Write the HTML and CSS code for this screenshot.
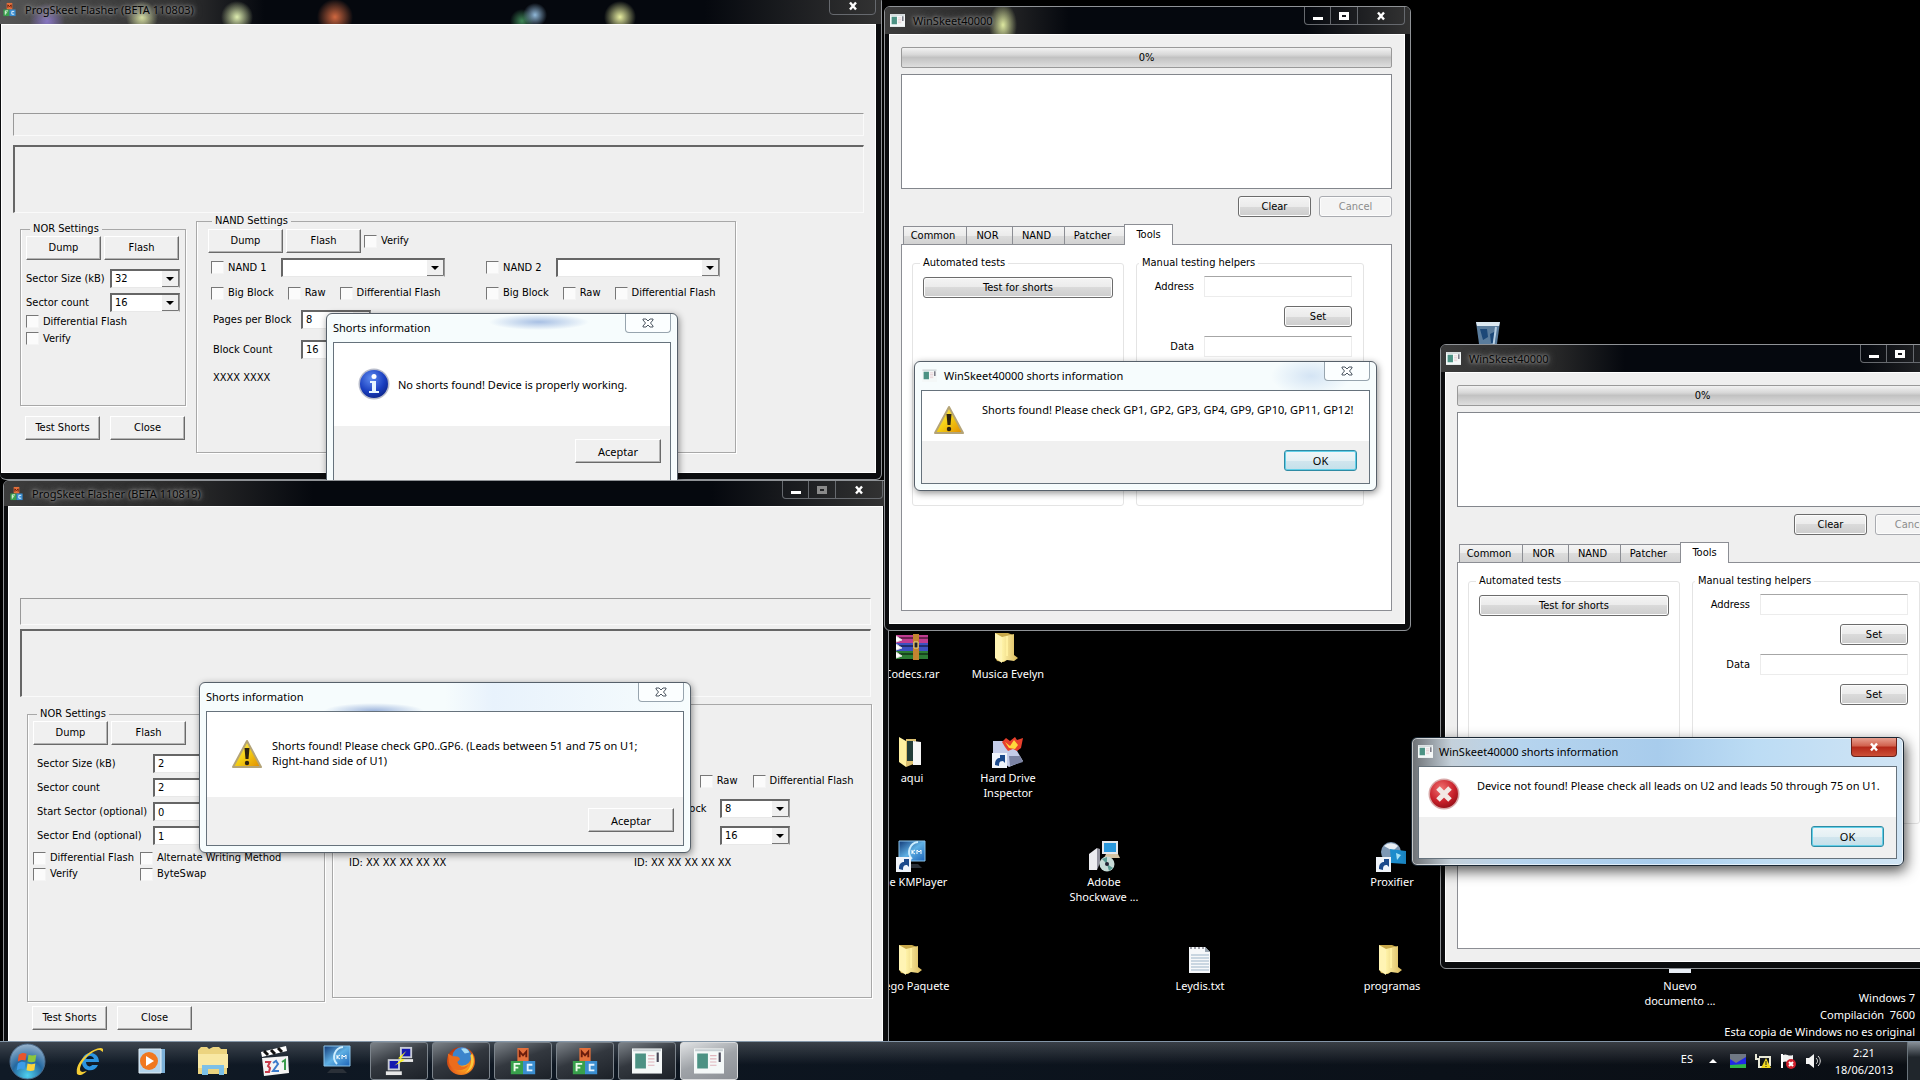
FILE: index.html
```html
<!DOCTYPE html>
<html lang="en">
<head>
<meta charset="utf-8">
<title>Desktop</title>
<link rel="stylesheet" href="styles.css">
</head>
<body>
<svg class="defs" aria-hidden="true">
  <defs>
    <linearGradient id="gFolder" x1="0" y1="0" x2="1" y2="0"><stop offset="0" stop-color="#fff3a8"/><stop offset=".5" stop-color="#ecd684"/><stop offset="1" stop-color="#d9b95a"/></linearGradient>
    <linearGradient id="gBlue" x1="0" y1="0" x2="1" y2="1"><stop offset="0" stop-color="#123a78"/><stop offset=".5" stop-color="#5fb0e4"/><stop offset="1" stop-color="#1d64b8"/></linearGradient>
    <radialGradient id="gInfo" cx=".4" cy=".3" r=".8"><stop offset="0" stop-color="#5f8cf0"/><stop offset=".6" stop-color="#1a3fc0"/><stop offset="1" stop-color="#0a1f80"/></radialGradient>
    <radialGradient id="gRed" cx=".4" cy=".3" r=".8"><stop offset="0" stop-color="#f07070"/><stop offset=".6" stop-color="#c8202a"/><stop offset="1" stop-color="#8a0c14"/></radialGradient>
    <linearGradient id="gWarn" x1="0" y1="0" x2="1" y2="1"><stop offset="0" stop-color="#fff27a"/><stop offset=".5" stop-color="#f4cf14"/><stop offset="1" stop-color="#e08a00"/></linearGradient>
    <radialGradient id="gOrb" cx=".5" cy=".9" r=".9"><stop offset="0" stop-color="#4fd0ee"/><stop offset=".5" stop-color="#2468a0"/><stop offset="1" stop-color="#9ab4cc"/></radialGradient>
    <radialGradient id="gFox" cx=".6" cy=".7" r=".7"><stop offset="0" stop-color="#ffb020"/><stop offset=".6" stop-color="#e8641c"/><stop offset="1" stop-color="#b83a10"/></radialGradient>
    <symbol id="folder" viewBox="0 0 32 32"><path d="M3 1h13l5 2v20l-9 7-7-1-2-4z" fill="#c9a94a"/><path d="M3 1l7 4v26l-7-5z" fill="#fff4b4"/><path d="M10 5l12-3v21l4 3-4 3-7-1-5 2z" fill="url(#gFolder)"/><path d="M15 4v20" stroke="#fff0a0" stroke-width="2"/></symbol>
    <symbol id="info" viewBox="0 0 32 32"><circle cx="16" cy="16" r="15.500" fill="#b8bccb"/><circle cx="16" cy="16" r="14" fill="url(#gInfo)"/><circle cx="16" cy="8.500" r="2.500" fill="#fff"/><path d="M12 13h6v10h3v2H11v-2h3v-8h-2z" fill="#e8f6ff"/></symbol>
    <symbol id="warn" viewBox="0 0 32 32"><path d="M16 3l14 26H2z" fill="url(#gWarn)" stroke="#b4a478" stroke-width="2" stroke-linejoin="round"/><path d="M13.500 10h5l-1 11h-3z" fill="#2b2110"/><circle cx="16" cy="25" r="2.200" fill="#2b2110"/></symbol>
    <symbol id="error" viewBox="0 0 32 32"><circle cx="16" cy="16" r="15.500" fill="#d8a8a8"/><circle cx="16" cy="16" r="14" fill="url(#gRed)"/><path d="M10 10l12 12M22 10L10 22" stroke="#f2e8e4" stroke-width="5"/></symbol>
    <symbol id="app" viewBox="0 0 28 24"><path d="M0 0h28v24H0z" fill="#f4f8f8"/><path d="M1 1h26v2H1z" fill="#c6ced2"/><path d="M3 5h10v14H3z" fill="#4c9284"/><path d="M15 7h6M15 10h6M15 13h6M15 16h6" stroke="#e0b4bc"/><path d="M23 4h2v9h-2z" fill="#445"/></symbol>
    <symbol id="mfc" viewBox="0 0 28 32"><path d="M8 2h12v14H8z" fill="#e4703c"/><path d="M10.500 12V6l3.500 4 3.500-4v6" fill="none" stroke="#6a1c0c" stroke-width="2"/><path d="M1 16h13v14H1z" fill="#38a04c"/><path d="M5 27v-8h6M5 23h4" fill="none" stroke="#eafbe8" stroke-width="2"/><path d="M14 16h13v14H14z" fill="#3b8ed0"/><path d="M24 20h-5v6h5" fill="none" stroke="#e6f4ff" stroke-width="2"/></symbol>
    <symbol id="kmp" viewBox="0 0 32 32"><path d="M3 1h26v20H3z" fill="url(#gBlue)" stroke="#8bc4ea"/><path d="M22 2a10 10 0 0 0-6 17" fill="none" stroke="#cdeeff" stroke-width="2"/><path d="M16 14v-4m0 2l3-2m-3 2l3 2m2 0v-4l2 2 2-2v4" fill="none" stroke="#fff"/><path d="M10 24h12l4 4H6z" fill="#2a3038"/></symbol>
    <symbol id="arrow" viewBox="0 0 32 32"><path d="M0 17h15v15H0z" fill="#f0f4fa"/><path d="M3 29c0-5 2-7 5-7v-3h-3 8v8l-2-2c-3 0-4 1-4 5z" fill="#1c4a8c"/></symbol>
    <symbol id="min" viewBox="0 0 14 12"><path d="M2 7h10v3H2z" fill="currentColor"/></symbol>
    <symbol id="max" viewBox="0 0 14 12"><path d="M2 2h10v8H2zM5 5v2h4V5z" fill="currentColor" fill-rule="evenodd"/></symbol>
    <symbol id="x" viewBox="0 0 14 12"><path d="M4 2.500l6 7M10 2.500l-6 7" stroke="currentColor" stroke-width="2.400"/></symbol>
    <symbol id="xo" viewBox="0 0 14 12"><path d="M2 2h3l2 2 2-2h3v1L9.500 6 12 9v1H9L7 8l-2 2H2V9l2.500-3L2 3z" fill="#fff" stroke="#4a5560"/></symbol>
  </defs>
</svg>

<main class="desktop">
  <ul class="icons">
    <li class="ic r4 c16"><svg viewBox="0 0 32 32"><path d="M4 2h24l-4 29H8z" fill="#5a7c9c"/><path d="M4 2h24l-1 4H5z" fill="#dce8f0"/><path d="M8 9h7l1 8-5 3zM18 14l6-3-1 12h-4z" fill="#1c4878"/><path d="M24 7l-3 22" stroke="#b8d0e4" stroke-width="2"/></svg></li>
    <li class="ic r7 c10"><svg viewBox="0 0 32 32"><path d="M0 3h32v8H0z" fill="#c03c90"/><path d="M0 11h32v8H0z" fill="#3c50c0"/><path d="M0 19h32v8H0z" fill="#2c7c34"/><path d="M0 6h32M0 14h32M0 22h32" stroke="#00000070" stroke-width="2"/><path d="M0 4l6 4-6 2M0 12l6 4-6 2M0 20l6 4-6 2" fill="#fff" stroke="#ddd"/><path d="M17 2h6v26h-6z" fill="#c48430"/><path d="M18 10h4v6h-4z" fill="#222" stroke="#ecd888"/></svg><span>Codecs.rar</span></li>
    <li class="ic r7 c11"><svg viewBox="0 0 32 32"><use href="#folder"/></svg><span>Musica Evelyn</span></li>
    <li class="ic r8 c10"><svg viewBox="0 0 32 32"><path d="M3 1l7 4v26l-7-5z" fill="#fff0a0"/><path d="M10 3h10v24l-10 4z" fill="#dcc070"/><path d="M11 5h8v20h-8z" fill="#223c38"/><path d="M17 5l8 1v23h-8z" fill="#f6f6f6"/></svg><span>aqui</span></li>
    <li class="ic r8 c11"><svg viewBox="0 0 32 32"><path d="M1 5h18l12 20-14 6L1 20z" fill="#c4cce8"/><path d="M17 20h11l3 6-13 4z" fill="#7c84a4"/><path d="M10 6l4-4 4 3 5-4 2 3 6-2-2 10-4 3-4-2-5 2-3-4z" fill="#e8402c"/><path d="M13 6l5 4 4-6 4 5-3 4-6-1z" fill="#ffd83c"/><use href="#arrow"/></svg><span>Hard Drive Inspector</span></li>
    <li class="ic r9 c10"><svg viewBox="0 0 32 32"><use href="#kmp"/><use href="#arrow"/></svg><span>The KMPlayer</span></li>
    <li class="ic r9 c12"><svg viewBox="0 0 32 32"><path d="M1 14l8-6v22H1z" fill="#ececf0"/><path d="M9 8l3 1v14l-3 7z" fill="#9494a0"/><path d="M14 1h16v13H14z" fill="#e4e8ec"/><path d="M16 3h12v9H16z" fill="#2a98dc"/><path d="M18 14h12l2 4H16z" fill="#d4c4a4"/><circle cx="19" cy="24" r="7.500" fill="#c8dcd8"/><path d="M19 24l-5-5 5-2zM19 24l6 4-4 3z" fill="#5c9c94"/><circle cx="19" cy="24" r="2" fill="#223"/></svg><span>Adobe Shockwave ...</span></li>
    <li class="ic r9 c15"><svg viewBox="0 0 32 32"><circle cx="15" cy="12" r="10" fill="#7e98b4"/><path d="M8 6c5-4 10-3 14 0l-5 5z" fill="#e8eef4"/><path d="M14 9l16 2v13l-15-1z" fill="#1c8ccc"/><path d="M20 13l5 2-4 5z" fill="#a8e4f8"/><use href="#arrow"/></svg><span>Proxifier</span></li>
    <li class="ic r10 c10"><svg viewBox="0 0 32 32"><use href="#folder"/></svg><span>Juego Paquete</span></li>
    <li class="ic r10 c13"><svg viewBox="0 0 32 32"><path d="M5 3h16l5 5v21H5z" fill="#f6f8fa"/><path d="M21 3v5h5z" fill="#98a4b0"/><path d="M6 4h15" stroke="#445" stroke-dasharray="2 2"/><path d="M7 11h18M7 14h18M7 17h18M7 20h18M7 23h18M7 26h18" stroke="#9cb4c8"/></svg><span>Leydis.txt</span></li>
    <li class="ic r10 c15"><svg viewBox="0 0 32 32"><use href="#folder"/></svg><span>programas</span></li>
    <li class="ic r10 c18"><svg viewBox="0 0 32 32"><path d="M5 3h22v26H5z" fill="#e8edf4"/></svg><span>Nuevo documento ...</span></li>
  </ul>

  <p class="watermark">Windows 7<br>Compilación &nbsp;7600<br>Esta copia de Windows no es original</p>

  <!-- ProgSkeet Flasher 110803 -->
  <section class="win dark w1">
    <header class="bar smudged"><svg class="tico" viewBox="0 0 28 32"><use href="#mfc"/></svg><h2>ProgSkeet Flasher (BETA 110803)</h2>
      <div class="ctl"><button class="cx" aria-label="Close"><svg><use href="#x"/></svg></button></div></header>
    <div class="client tahoma">
      <div class="strip"></div>
      <div class="well"></div>
      <div class="panels">
        <div class="left">
          <fieldset class="grp nor"><legend>NOR Settings</legend>
            <div class="btns"><button class="cb">Dump</button><button class="cb">Flash</button></div>
            <div class="fields">
              <label for="a1">Sector Size (kB)</label><select id="a1"><option>32</option></select>
              <label for="a2">Sector count</label><select id="a2"><option>16</option></select>
            </div>
            <label class="ck"><input type="checkbox">Differential Flash</label>
            <label class="ck"><input type="checkbox">Verify</label>
          </fieldset>
          <div class="btns foot"><button class="cb">Test Shorts</button><button class="cb">Close</button></div>
        </div>
        <fieldset class="grp nand"><legend>NAND Settings</legend>
          <div class="btns"><button class="cb">Dump</button><button class="cb">Flash</button><label class="ck"><input type="checkbox">Verify</label></div>
          <div class="chips">
            <div class="chip">
              <div class="pick"><label class="ck"><input type="checkbox">NAND 1</label><select aria-label="NAND 1 device"><option></option></select></div>
              <div class="opts"><label class="ck"><input type="checkbox">Big Block</label><label class="ck"><input type="checkbox">Raw</label><label class="ck"><input type="checkbox">Differential Flash</label></div>
              <div class="fields">
                <label for="a3">Pages per Block</label><select id="a3"><option>8</option></select>
                <label for="a4">Block Count</label><select id="a4"><option>16</option></select>
              </div>
              <p>XXXX XXXX</p>
            </div>
            <div class="chip">
              <div class="pick"><label class="ck"><input type="checkbox">NAND 2</label><select aria-label="NAND 2 device"><option></option></select></div>
              <div class="opts"><label class="ck"><input type="checkbox">Big Block</label><label class="ck"><input type="checkbox">Raw</label><label class="ck"><input type="checkbox">Differential Flash</label></div>
            </div>
          </div>
        </fieldset>
      </div>
    </div>
  </section>

  <section class="win light d1" role="dialog">
    <header class="bar"><h2>Shorts information</h2><div class="ctl"><button class="cx" aria-label="Close"><svg><use href="#xo"/></svg></button></div></header>
    <div class="body"><div class="msg"><svg viewBox="0 0 32 32"><use href="#info"/></svg><p>No shorts found! Device is properly working.</p></div>
      <div class="acts"><button class="cb wide">Aceptar</button></div></div>
  </section>

  <!-- ProgSkeet Flasher 110819 -->
  <section class="win dark w2">
    <header class="bar"><svg class="tico" viewBox="0 0 28 32"><use href="#mfc"/></svg><h2>ProgSkeet Flasher (BETA 110819)</h2>
      <div class="ctl"><button aria-label="Minimize"><svg><use href="#min"/></svg></button><button class="off" aria-label="Maximize"><svg><use href="#max"/></svg></button><button class="cx" aria-label="Close"><svg><use href="#x"/></svg></button></div></header>
    <div class="client tahoma">
      <div class="strip"></div>
      <div class="well"></div>
      <div class="panels">
        <div class="left">
          <fieldset class="grp nor"><legend>NOR Settings</legend>
            <div class="btns"><button class="cb">Dump</button><button class="cb">Flash</button></div>
            <div class="fields">
              <label for="b1">Sector Size (kB)</label><select id="b1"><option>2</option></select>
              <label for="b2">Sector count</label><select id="b2"><option>2</option></select>
              <label for="b3">Start Sector (optional)</label><input id="b3" type="text" value="0">
              <label for="b4">Sector End (optional)</label><input id="b4" type="text" value="1">
            </div>
            <div class="cks">
              <label class="ck"><input type="checkbox">Differential Flash</label><label class="ck"><input type="checkbox">Alternate Writing Method</label>
              <label class="ck"><input type="checkbox">Verify</label><label class="ck"><input type="checkbox">ByteSwap</label>
            </div>
          </fieldset>
          <div class="btns foot"><button class="cb">Test Shorts</button><button class="cb">Close</button></div>
        </div>
        <fieldset class="grp nand"><legend>NAND Settings</legend>
          <div class="chips">
            <div class="chip idonly"><p>ID: XX XX XX XX XX</p></div>
            <div class="chip">
              <div class="opts"><label class="ck"><input type="checkbox">Big Block</label><label class="ck"><input type="checkbox">Raw</label><label class="ck"><input type="checkbox">Differential Flash</label></div>
              <div class="fields">
                <label for="b5">Pages per Block</label><select id="b5"><option>8</option></select>
                <label for="b6">Block Count</label><select id="b6"><option>16</option></select>
              </div>
              <p>ID: XX XX XX XX XX</p>
            </div>
          </div>
        </fieldset>
      </div>
    </div>
  </section>

  <section class="win light d2" role="dialog">
    <header class="bar"><h2>Shorts information</h2><div class="ctl"><button class="cx" aria-label="Close"><svg><use href="#xo"/></svg></button></div></header>
    <div class="body"><div class="msg"><svg viewBox="0 0 32 32"><use href="#warn"/></svg><p>Shorts found! Please check GP0..GP6. (Leads between 51 and 75 on U1;<br>Right-hand side of U1)</p></div>
      <div class="acts"><button class="cb wide">Aceptar</button></div></div>
  </section>

  <!-- WinSkeet, left copy -->
  <section class="win dark skeet w3">
    <header class="bar"><svg class="tico" viewBox="0 0 28 24"><use href="#app"/></svg><h2>WinSkeet40000</h2>
      <div class="ctl"><button aria-label="Minimize"><svg><use href="#min"/></svg></button><button aria-label="Maximize"><svg><use href="#max"/></svg></button><button class="cx" aria-label="Close"><svg><use href="#x"/></svg></button></div></header>
    <div class="client tahoma">
      <div class="progress" role="progressbar" aria-valuenow="0">0%</div>
      <textarea aria-label="Log"></textarea>
      <div class="logbtns"><button class="qb">Clear</button><button class="qb" disabled>Cancel</button></div>
      <div class="tabs" role="tablist"><button role="tab">Common</button><button role="tab">NOR</button><button role="tab">NAND</button><button role="tab">Patcher</button><button role="tab" class="on">Tools</button></div>
      <div class="pane">
        <fieldset class="auto"><legend>Automated tests</legend><button class="qb">Test for shorts</button></fieldset>
        <fieldset class="manual"><legend>Manual testing helpers</legend>
          <label for="c1">Address</label><input id="c1" type="text"><button class="qb">Set</button>
          <label for="c2">Data</label><input id="c2" type="text"><button class="qb">Set</button>
        </fieldset>
      </div>
    </div>
  </section>

  <section class="win light d3" role="dialog">
    <header class="bar"><svg class="tico" viewBox="0 0 28 24"><use href="#app"/></svg><h2>WinSkeet40000 shorts information</h2><div class="ctl"><button class="cx" aria-label="Close"><svg><use href="#xo"/></svg></button></div></header>
    <div class="body"><div class="msg"><svg viewBox="0 0 32 32"><use href="#warn"/></svg><p>Shorts found! Please check GP1, GP2, GP3, GP4, GP9, GP10, GP11, GP12!</p></div>
      <div class="acts"><button class="qb ok">OK</button></div></div>
  </section>

  <!-- WinSkeet, right copy -->
  <section class="win dark skeet w4">
    <header class="bar"><svg class="tico" viewBox="0 0 28 24"><use href="#app"/></svg><h2>WinSkeet40000</h2>
      <div class="ctl"><button aria-label="Minimize"><svg><use href="#min"/></svg></button><button aria-label="Maximize"><svg><use href="#max"/></svg></button><button class="cx" aria-label="Close"><svg><use href="#x"/></svg></button></div></header>
    <div class="client tahoma">
      <div class="progress" role="progressbar" aria-valuenow="0">0%</div>
      <textarea aria-label="Log"></textarea>
      <div class="logbtns"><button class="qb">Clear</button><button class="qb" disabled>Cancel</button></div>
      <div class="tabs" role="tablist"><button role="tab">Common</button><button role="tab">NOR</button><button role="tab">NAND</button><button role="tab">Patcher</button><button role="tab" class="on">Tools</button></div>
      <div class="pane">
        <fieldset class="auto"><legend>Automated tests</legend><button class="qb">Test for shorts</button></fieldset>
        <fieldset class="manual"><legend>Manual testing helpers</legend>
          <label for="e1">Address</label><input id="e1" type="text"><button class="qb">Set</button>
          <label for="e2">Data</label><input id="e2" type="text"><button class="qb">Set</button>
        </fieldset>
      </div>
    </div>
  </section>

  <section class="win light active d4" role="dialog">
    <header class="bar"><svg class="tico" viewBox="0 0 28 24"><use href="#app"/></svg><h2>WinSkeet40000 shorts information</h2><div class="ctl"><button class="cx" aria-label="Close"><svg><use href="#x"/></svg></button></div></header>
    <div class="body"><div class="msg"><svg viewBox="0 0 32 32"><use href="#error"/></svg><p>Device not found! Please check all leads on U2 and leads 50 through 75 on U1.</p></div>
      <div class="acts"><button class="qb ok">OK</button></div></div>
  </section>
</main>

<footer class="taskbar">
  <button class="orb" aria-label="Start"><svg viewBox="0 0 38 38"><circle cx="19" cy="19" r="18" fill="url(#gOrb)" stroke="#4c6c8c"/><path d="M10 12c3-2 5-2 8-1l-1 7c-3-1-5-1-8 1z" fill="#e8562c"/><path d="M20 12c3 1 5 1 8 0l-1 7c-3 1-5 1-8 0z" fill="#8cc63c"/><path d="M9 21c3-2 5-2 8-1l-1 7c-3-1-5-1-8 1z" fill="#3c9ce8"/><path d="M19 21c3 1 5 1 8 0l-1 7c-3 1-5 1-8 0z" fill="#fcd43c"/></svg></button>
  <nav class="quick">
    <button aria-label="Internet Explorer"><svg viewBox="0 0 32 32"><path d="M8 17h18c0-12-17-12-17 0 0 10 13 11 16 3h-6c-2 3-6 1-6-3z" fill="#2c94e0"/><path d="M13 14h8c-1-4-7-4-8 0z" fill="#0c1824"/><path d="M30 4c-4-5-29 10-26 25 3 3 8-1 10-3-3 1-7 2-7-2 1-9 14-20 20-19l3 2z" fill="#f4cc34"/></svg></button>
    <button aria-label="Media Player"><svg viewBox="0 0 32 32"><path d="M10 4h20v24H10z" fill="#7cb0d8"/><path d="M4 4h22v24H4z" fill="#b4d4ec" stroke="#e4f0f8"/><circle cx="14" cy="16" r="9" fill="#f07820"/><path d="M11 11l8 5-8 5z" fill="#fff"/></svg></button>
    <button aria-label="Explorer"><svg viewBox="0 0 32 32"><path d="M1 5l3-3h6l2 2 4-2h6l2 2h6v25H1z" fill="#ecd480"/><path d="M1 9h30v14H1z" fill="#f8e8a4"/><path d="M5 30V20h22v10h-5v-6H11v6z" fill="#7cc0e8"/></svg></button>
    <button aria-label="Media Player Classic"><svg viewBox="0 0 32 32"><path d="M2 7l25-6 1 5L3 12z" fill="#fff"/><path d="M5 6l4 4M12 5l4 4M19 3l4 4" stroke="#111" stroke-width="3"/><path d="M3 13l26-2 1 17-25 3z" fill="#f4f4f4"/><path d="M6 17h5l-2 4 2 2-1 4H6" fill="none" stroke="#c83c4c" stroke-width="2"/><path d="M14 18l3-2 2 3-5 7h6" fill="none" stroke="#3c7ccc" stroke-width="2"/><path d="M23 17l3-2v10" fill="none" stroke="#3c9c4c" stroke-width="2"/></svg></button>
    <button aria-label="KMPlayer"><svg viewBox="0 0 32 32"><use href="#kmp"/></svg></button>
  </nav>
  <nav class="tasks">
    <button aria-label="PuTTY"><svg viewBox="0 0 32 32"><path d="M17 1h13v12H17z" fill="#c8ccd4"/><path d="M19 3h9v8h-9z" fill="#1418b0"/><path d="M16 14h15v3H16z" fill="#e8e8e8"/><path d="M4 14h13v12H4z" fill="#c8ccd4"/><path d="M6 16h9v8H6z" fill="#1418b0"/><path d="M2 27h17v4H2z" fill="#e8e8e8"/><path d="M24 5l-9 8 4 1-8 7 11-6-4-2z" fill="#fcf420"/></svg></button>
    <button aria-label="Firefox"><svg viewBox="0 0 32 32"><circle cx="16" cy="16" r="15" fill="url(#gFox)"/><circle cx="17" cy="11" r="10" fill="#3c84cc"/><path d="M16 3c4-2 8 1 9 4l-5 1z" fill="#a8dcf4"/><path d="M2 8l5 3c4 0 7 0 8 3l-3 3c2 6 8 6 12 3-3 8-18 8-21-3z" fill="#ec6c1c"/><path d="M28 8c4 8 1 18-8 21 6-5 8-12 6-19z" fill="#fcc83c"/></svg></button>
    <button aria-label="ProgSkeet Flasher 110803"><svg viewBox="0 0 28 32"><use href="#mfc"/></svg></button>
    <button aria-label="ProgSkeet Flasher 110819"><svg viewBox="0 0 28 32"><use href="#mfc"/></svg></button>
    <button aria-label="WinSkeet"><svg viewBox="0 0 28 24"><use href="#app"/></svg></button>
    <button aria-label="WinSkeet" class="cur"><svg viewBox="0 0 28 24"><use href="#app"/></svg></button>
  </nav>
  <div class="tray">
    <span class="lang">ES</span>
    <svg viewBox="0 0 16 16"><path d="M4 10l4-4 4 4z" fill="#fff"/></svg>
    <svg viewBox="0 0 16 16"><path d="M0 1h16v14H0z" fill="#707884"/><path d="M0 6l6 4 10-6v11H0z" fill="#2028e8"/><path d="M0 12l16-1v4H0z" fill="#30b848"/></svg>
    <svg viewBox="0 0 16 16"><path d="M1 1v5h3v8h5M4 4h11v9" fill="none" stroke="#e8e8d8" stroke-width="2"/><path d="M11 5l5 10H6z" fill="#f0d820"/><path d="M11 8v4m0 1v1" stroke="#222"/></svg>
    <svg viewBox="0 0 16 16"><path d="M2 1v14" stroke="#fff" stroke-width="2"/><path d="M3 2c4-2 5 2 10 0v7c-5 2-6-2-10 0z" fill="#f0f0f0"/><circle cx="11" cy="11" r="5" fill="#d0202c"/><path d="M9 9l4 4m0-4l-4 4" stroke="#fff" stroke-width="2"/></svg>
    <svg viewBox="0 0 16 16"><path d="M1 5h3l5-4v14l-5-4H1z" fill="#f4f4f4"/><path d="M11 5c2 2 2 4 0 6M13 3c3 3 3 7 0 10" fill="none" stroke="#e0e0e0"/></svg>
    <time class="clock">2:21<br>18/06/2013</time>
    <button class="peek" aria-label="Show desktop"></button>
  </div>
</footer>
</body>
</html>
```
FILE: styles.css
```css
* { box-sizing: border-box; }
body { margin: 0; height: 100vh; display: flex; flex-direction: column; overflow: hidden; background: #000; font: 11px/15px "Noto Sans", "Open Sans", sans-serif; color: #000; }
h2, p, ul, fieldset, legend { margin: 0; padding: 0; font: inherit; }
fieldset { min-width: 0; }
button, input, select, textarea { margin: 0; padding: 0; font: inherit; color: inherit; border-radius: 0; }
.defs { position: absolute; width: 0; height: 0; }
.tahoma, .cb, .qb { font: 11px/14px "DejaVu Sans Condensed", "DejaVu Sans", sans-serif; }

/* desktop */
.desktop { flex: 1; position: relative; overflow: hidden; }
.icons { list-style: none; display: grid; grid-template-columns: repeat(20, 96px); grid-template-rows: repeat(10, 104px); padding-top: 8px; }
.ic { display: flex; flex-direction: column; align-items: center; gap: 2px; color: #fff; text-align: center; padding: 0 8px; }
.ic svg { width: 32px; height: 32px; }
.r4 { grid-row: 4; } .r7 { grid-row: 7; } .r8 { grid-row: 8; } .r9 { grid-row: 9; } .r10 { grid-row: 10; }
.c10 { grid-column: 10; } .c11 { grid-column: 11; } .c12 { grid-column: 12; } .c13 { grid-column: 13; } .c15 { grid-column: 15; } .c16 { grid-column: 16; } .c18 { grid-column: 18; }
.watermark { position: absolute; right: 5px; bottom: 1px; color: #fff; text-align: right; line-height: 17px; }

/* window frames */
.win { position: absolute; display: flex; flex-direction: column; }
.bar { display: flex; align-items: center; flex: none; gap: 8px; }
.bar h2 { flex: 1; white-space: nowrap; }
.tico { width: 15px; height: 15px; flex: none; }
.ctl { display: flex; align-self: flex-start; }
.ctl button { width: 27px; height: 18px; display: flex; align-items: center; justify-content: center; background: none; border: 1px solid #66696e; border-top: 0; border-left-width: 0; color: #fff; }
.ctl button:first-child { border-left-width: 1px; border-bottom-left-radius: 4px; }
.ctl .cx { width: 47px; border-bottom-right-radius: 4px; }
.ctl .off { color: #8a8a8a; }
.ctl svg { width: 14px; height: 12px; }
.dark { border: 1px solid #8f9296; border-radius: 6px; background: #0b0c0e; padding: 0 5px 6px 4px; }
.dark .bar { height: 27px; margin: 0 -5px 0 -4px; padding: 0 5px 0 5px; background: linear-gradient(90deg, #3c3c3c, #2c2c2c 20%, #05080e 35%, #05080e 80%, #333); border-radius: 5px 5px 0 0; }
.dark .bar h2 { color: #050505; text-shadow: 0 0 3px #9a9a9a, 0 0 5px #8a8a8a, 0 0 8px #777; }
.client { flex: 1; min-height: 0; background: #efefef; border: 1px solid #fff; }
.light { border: 1px solid #56606a; border-radius: 6px; background: #f6fcfd; padding: 0 6px 6px; box-shadow: 0 0 0 1px #ffffff90 inset, 1px 2px 7px #00000070; }
.light .bar { height: 28px; padding-bottom: 2px; }
.light .ctl button { background: #fbfeff; border-color: #97a4ae; height: 19px; width: 46px; }
.body { flex: 1; min-height: 0; display: flex; flex-direction: column; border: 1px solid #66727c; background: #f0f0f0; }
.msg { background: #fff; display: flex; align-items: flex-start; }
.msg svg { width: 32px; height: 32px; flex: none; }
.msg p { white-space: nowrap; }
.acts { display: flex; justify-content: flex-end; }

/* classic controls */
.cb { width: 75px; height: 24px; background: #f0f0f0; border: 1px solid; border-color: #fff #6a6a6a #6a6a6a #fff; box-shadow: inset -1px -1px #b4b4b4; white-space: nowrap; }
.cb.wide { width: 86px; font: 11px/15px "Noto Sans", "Open Sans", sans-serif; }
.ck { display: flex; align-items: center; gap: 4px; white-space: nowrap; }
.ck input { appearance: none; width: 13px; height: 13px; background: #fbfbfb; border: 1px solid; border-color: #777 #f4f4f4 #f4f4f4 #777; }
select, .fields input { appearance: none; height: 19px; width: 70px; background: #fff; border: 1px solid; border-color: #666 #999 #e8e8e8 #666; border-width: 2px 1px 1px 2px; padding: 0 3px; }
select { background: #fff url("data:image/svg+xml,%3Csvg xmlns='http://www.w3.org/2000/svg' width='17' height='16'%3E%3Cpath d='M0 0h17v16H0z' fill='%23f0f0f0'/%3E%3Cpath d='M0 15.500h16.500V0' fill='none' stroke='%23777'/%3E%3Cpath d='M4 6h8l-4 4z'/%3E%3C/svg%3E") right center no-repeat; }
.grp { border: 1px solid #a8a8a8; box-shadow: 1px 1px #fff, inset 1px 0 #fff; }
.grp legend { margin-left: 4px; padding: 0 3px; }
.btns { display: flex; }
.fields { display: grid; align-items: center; }
.strip { border: 1px solid; border-color: #999 #fafafa #fafafa #999; }
.well { border: 1px solid; border-color: #666 #fafafa #fafafa #666; border-top-width: 2px; border-left-width: 2px; height: 68px; }
.panels { display: flex; align-items: flex-start; }

/* ProgSkeet 110803 */
.w1 { left: 0; top: -4px; width: 882px; height: 484px; border-left: 0; padding-left: 1px; }
.w1 .bar { padding: 0 5px 2px 2px; margin-left: -1px; }
.w1 .ctl button { border: 1px solid #66696e; }
.smudged.bar { background: radial-gradient(circle at 47px 24px, #8a78c8, #8a78c800 18px), radial-gradient(circle at 142px 20px, #dfe8a8, #dfe8a800 16px), radial-gradient(circle at 237px 20px, #dfeeb0, #dfeeb000 16px), radial-gradient(circle at 335px 20px, #d06840, #d0684000 18px), radial-gradient(circle at 535px 18px, #90b8d8, #90b8d800 12px), radial-gradient(circle at 522px 24px, #408858, #40885800 12px), radial-gradient(circle at 620px 20px, #e8eea0, #e8eea000 16px), linear-gradient(90deg, #555, #333 20%, #05080e 30%, #05080e 80%, #333); }
.w1 .strip { margin: 88px 11px 0 11px; height: 23px; }
.w1 .well { margin: 9px 11px 0; }
.w1 .panels { padding-left: 18px; gap: 10px; }
.w1 .left { padding-top: 9px; }
.w1 .nor { width: 166px; height: 184px; padding: 0 5px; }
.w1 .nor .btns { gap: 3px; }
.w1 .nor .fields { grid-template-columns: 84px 70px; row-gap: 5px; margin: 9px 0 1px; }
.w1 .nor .ck { height: 17px; }
.foot { padding: 10px 0 0 5px; gap: 10px; }
.w1 .foot { width: 166px; }
.w1 .nand { width: 540px; height: 239px; margin-top: 1px; padding: 1px 11px 0; }
.w1 .nand .btns { gap: 3px; align-items: center; }
.chips { display: flex; }
.w1 .chips { padding: 5px 0 0 3px; }
.w1 .chip { width: 275px; flex: none; }
.pick { display: grid; grid-template-columns: 70px 164px; }
.pick select { width: 100%; }
.opts { display: flex; }
.w1 .opts { gap: 14px; height: 18px; margin: 7px 0 8px; align-items: center; }
.w1 .chip .fields { grid-template-columns: 90px 70px; row-gap: 11px; }
.w1 .chip p { padding-top: 12px; }
.w1 .chip .fields label, .w1 .chip p { padding-left: 2px; }
.d1 { left: 326px; top: 313px; width: 352px; height: 176px; }
.d1 .bar { background: radial-gradient(ellipse 50px 8px at 206px 8px, #a8c0e4, #a8c0e400); }
.d1 .msg { height: 83px; padding: 25px 0 0 24px; gap: 8px; }
.d1 .msg p { padding-top: 9px; }
.d1 .acts { padding: 13px 9px 0; }

/* ProgSkeet 110819 */
.w2 { left: 3px; top: 480px; width: 886px; height: 570px; border-top-right-radius: 0; }
.w2 .bar { height: 25px; }
.w2 .strip { margin: 91px 11px 0 11px; height: 27px; }
.w2 .well { margin: 4px 11px 0; }
.w2 .panels { padding-left: 18px; gap: 7px; }
.w2 .left { padding-top: 10px; }
.w2 .nor { width: 298px; height: 295px; padding: 0 5px; }
.w2 .nor .btns { gap: 3px; }
.w2 .nor .fields { grid-template-columns: 116px 70px; row-gap: 5px; margin: 9px 4px 5px; }
.cks { display: grid; grid-template-columns: 107px auto; line-height: 16px; }
.w2 .foot { padding-top: 4px; }
.w2 .nand { width: 540px; height: 301px; padding: 62px 4px 0; }
.w2 .chip { width: 285px; flex: none; }
.w2 .chip:last-child { width: 240px; }
.w2 .opts { gap: 15px; height: 16px; margin-bottom: 10px; }
.w2 .chip .fields { grid-template-columns: 98px 70px; row-gap: 8px; }
.w2 .chip .fields label { padding-left: 6px; }
.w2 .chip p { padding: 11px 0 0 12px; }
.w2 .idonly { padding-top: 72px; }
.d2 { left: 199px; top: 682px; width: 492px; height: 171px; }
.d2 .bar { background: radial-gradient(ellipse 50px 8px at 168px 28px, #9cb4dc, #9cb4dc00), linear-gradient(90deg, #f6fcfd 50%, #e8f2fc 60%, #f6fcfd); }
.d2 .msg { height: 85px; padding: 26px 0 0 24px; gap: 9px; }
.d2 .acts { padding: 11px 9px 0; }

/* WinSkeet */
.skeet { width: 527px; }
.skeet .bar { padding: 0 5px; }
.skeet .client { padding: 12px 12px 12px 11px; display: flex; flex-direction: column; }
.progress { height: 21px; border: 1px solid #999; border-radius: 2px; background: linear-gradient(#f2f2f2, #d8d8d8 35%, #c2c2c2 50%, #d0d0d0 75%, #dedede); text-align: center; line-height: 19px; }
textarea { display: block; resize: none; margin-top: 6px; border: 1px solid #83868c; background: #fff; }
.qb { height: 21px; border: 1px solid #6c6c6c; border-radius: 3px; background: linear-gradient(#f4f4f4, #ebebeb 50%, #dadada 50%, #cdcdcd); box-shadow: inset 0 0 0 1px #fcfcfc; text-align: center; }
.qb:disabled { background: #f4f4f4; border-color: #a9abb0; color: #8c8c8c; }
.qb.ok { width: 73px; border-color: #2f8ba4; box-shadow: inset 0 0 0 1px #62cfe8; background: linear-gradient(#f0f6f8, #e4f0f4 50%, #d2e6ee 50%, #c4e0ea); font: 11px/15px "Noto Sans", "Open Sans", sans-serif; }
.logbtns { display: flex; justify-content: flex-end; gap: 8px; margin: 7px 0 7px; }
.logbtns .qb { width: 73px; }
.tabs { display: flex; align-items: flex-end; height: 20px; padding-left: 2px; }
.tabs button { height: 18px; padding-right: 4px; border: 1px solid #8c8e94; border-bottom: 0; border-right: 0; background: linear-gradient(#f4f4f4, #ebebeb 50%, #dcdcdc 50%, #d2d2d2); }
.tabs button:nth-child(1) { width: 63px; }
.tabs button:nth-child(2) { width: 46px; }
.tabs button:nth-child(3) { width: 52px; }
.tabs button:nth-child(4) { width: 60px; }
.tabs .on { width: 49px; height: 21px; padding: 0; margin-bottom: -1px; background: #fff; border-right: 1px solid #8c8e94; position: relative; }
.pane { flex: 1; border: 1px solid #8c8e94; background: #fff; display: flex; align-items: flex-start; gap: 12px; padding: 11px 10px; }
.pane fieldset { height: 250px; border: 1px solid #e4e4e4; border-radius: 3px; }
.pane legend { padding: 0 3px; }
.auto { width: 212px; padding: 7px 10px; flex: none; }
.auto legend { margin-left: -3px; }
.auto .qb { width: 100%; }
.manual { width: 228px; padding: 6px 11px; display: grid; grid-template-columns: 46px 90px 68px; row-gap: 9px; justify-content: end; align-content: start; flex: none; }
.manual legend { margin-left: -9px; }
.manual label { text-align: right; line-height: 21px; }
.manual input { grid-column: 2 / 4; margin-left: 10px; height: 21px; border: 1px solid #ececec; border-top-color: #a6a6a6; background: #fff; min-width: 0; }
.manual .qb { grid-column: 3; }
.w3 { left: 884px; top: 6px; height: 625px; }
.w3 .bar { background: radial-gradient(ellipse 14px 22px at 118px 18px, #dde8a0, #dde8a000), linear-gradient(90deg, #3c3c3c, #2c2c2c 20%, #05080e 35%, #05080e 80%, #333); }
.w3 textarea { height: 115px; }
.w4 { left: 1440px; top: 344px; height: 625px; }
.w4 textarea { height: 95px; }
.d3 { left: 914px; top: 361px; width: 463px; height: 130px; }
.d3 .bar { background: radial-gradient(ellipse 40px 20px at 390px 14px, #d4e4f4, #d4e4f400); }
.d4 .bar, .d3 .bar { padding-left: 1px; gap: 7px; }
.d3 .msg { height: 50px; padding: 13px 0 0 11px; gap: 17px; }
.d3 .msg p { margin-top: -2px; }
.d3 .acts, .d4 .acts { padding: 9px 12px 0; }
.d4 { left: 1411px; top: 737px; width: 493px; height: 129px; border-color: #1b2834; background: linear-gradient(90deg, #6c7074, #c4d0da 8%, #b6d4ee 22%, #a8ccec 50%, #bcdcf4 70%, #d0e4f4); box-shadow: inset 0 0 0 1px #ffffffa0, 2px 5px 14px #000000b0; }
.d4 .bar { padding-left: 0; gap: 6px; }
.d4 .ctl button { color: #fff; border-color: #6a2018; background: linear-gradient(#e8a090, #d0604c 45%, #b42818 50%, #cc5038); }
.d4 .msg { height: 50px; padding: 11px 0 0 9px; gap: 17px; }

/* taskbar */
.taskbar { flex: none; height: 39px; display: flex; align-items: stretch; border-top: 1px solid #8496a8; background: linear-gradient(#ffffff30, #ffffff00 60%), linear-gradient(90deg, #101a26, #0c141e 50%, #0a0e14); color: #fff; }
.taskbar button { border: 0; background: none; display: flex; align-items: center; justify-content: center; }
.orb { width: 58px; padding-right: 4px; }
.orb svg { width: 37px; height: 37px; }
.quick { display: flex; }
.quick button { width: 62px; }
.quick svg { width: 32px; height: 32px; }
.tasks { display: flex; gap: 4px; padding-left: 2px; }
.tasks .cur, .tasks button { width: 58px; border: 1px solid #7c848c; border-radius: 3px; background: linear-gradient(160deg, #7c8288, #33383f 45%, #1c2128); }
.tasks .cur { background: linear-gradient(160deg, #e0e2e4, #9fa3a8 50%, #8c9096); border-color: #d8dadc; }
.tasks svg { width: 30px; height: 30px; }
.tray { display: flex; align-items: center; margin-left: auto; gap: 9px; }
.tray svg { width: 16px; height: 16px; }
.lang { padding: 0 3px 6px 0; }
.clock { text-align: center; line-height: 17px; width: 68px; }
.tray .peek { width: 13px; align-self: stretch; border-left: 1px solid #6a747c; background: linear-gradient(#889098, #20262c 40%); }
```
